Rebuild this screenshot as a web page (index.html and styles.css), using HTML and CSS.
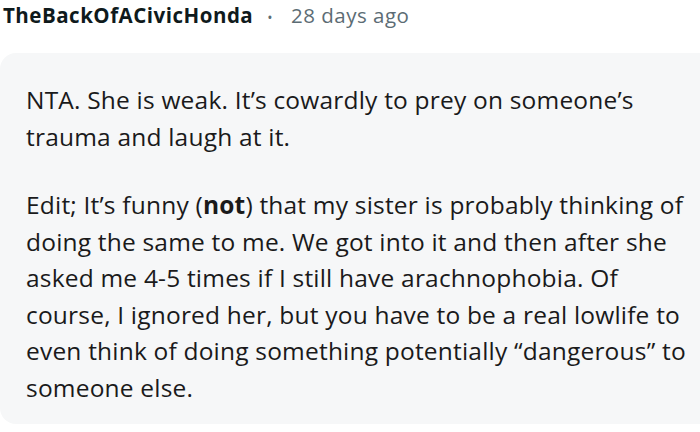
FILE: index.html
```html
<!DOCTYPE html>
<html lang="en">
<head>
<meta charset="utf-8">
<title>Comment</title>
<link rel="stylesheet" href="styles.css">
</head>
<body>
<div class="comment">
  <div class="meta">
    <span class="author">TheBackOfACivicHonda</span>
    <span class="dot">•</span>
    <span class="time">28 days ago</span>
  </div>
  <div class="card">
    <p>NTA. She is weak. It’s cowardly to prey on someone’s trauma and laugh at it.</p>
    <p>Edit; It’s funny (<strong>not</strong>) that my sister is probably thinking of doing the same to me. We got into it and then after she asked me 4-5 times if I still have arachnophobia. Of course, I ignored her, but you have to be a real lowlife to even think of doing something potentially “dangerous” to someone else.</p>
  </div>
</div>
</body>
</html>
```

FILE: styles.css
```css
html, body {
  margin: 0;
  padding: 0;
  background: #ffffff;
}
body {
  font-family: "Open Sans", "Noto Sans", sans-serif;
  width: 700px;
  height: 432px;
  overflow: hidden;
}
.comment {
  display: flex;
  flex-direction: column;
  gap: 20px;
}
.meta {
  display: flex;
  align-items: baseline;
  padding-left: 3px;
  font-size: 20.5px;
  line-height: 30px;
  letter-spacing: 0.5px;
}
.author {
  font-weight: 700;
  color: #0f1a1c;
}
.dot {
  color: #5c6c74;
  font-size: 14px;
  margin: 0 18px 0 14px;
}
.time {
  color: #5c6c74;
}
.card {
  background: #f6f7f8;
  border-radius: 16px 0 0 16px;
  margin-right: -20px;
  padding: 29px 28px 18px 26px;
  display: flex;
  flex-direction: column;
  gap: 32px;
  color: #1a1a1b;
  font-size: 24.5px;
  line-height: 36.5px;
  letter-spacing: 0.2px;
}
.card p {
  margin: 0;
}
.card strong {
  font-weight: 700;
}
```
